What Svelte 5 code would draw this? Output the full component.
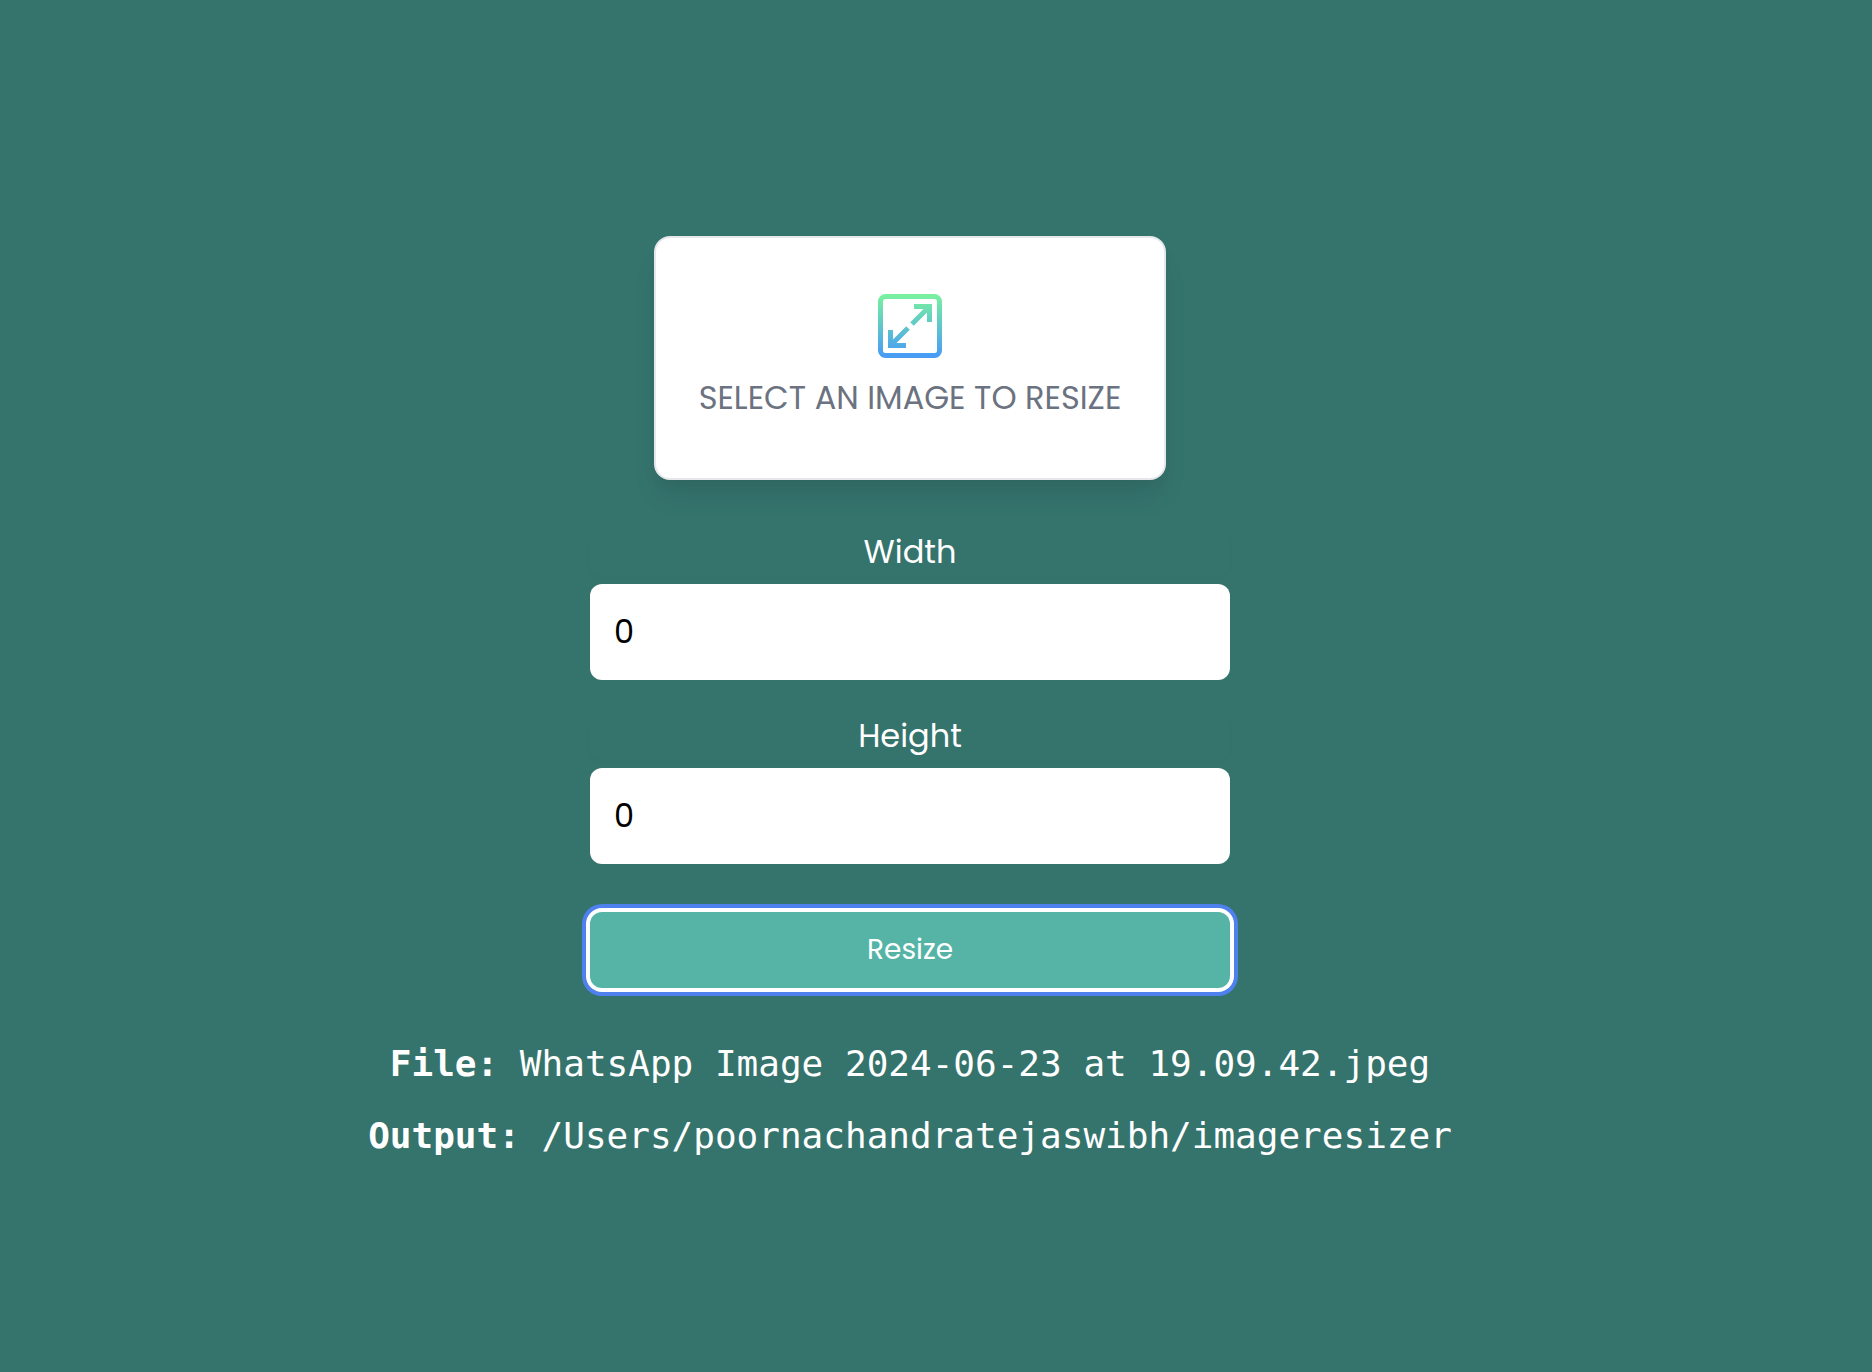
<script>
  let width = $state('0');
  let height = $state('0');
  let picker;
  let fileName = $state('WhatsApp Image 2024-06-23 at 19.09.42.jpeg');
  const output = '/Users/poornachandratejaswibh/imageresizer';

  function pick(event) {
    const file = event.currentTarget.files[0];
    if (file) fileName = file.name;
  }
</script>

<main class="page">
  <button class="card" type="button" onclick={() => picker.click()}>
    <svg class="icon" viewBox="0 0 64 64" aria-hidden="true">
      <defs>
        <linearGradient id="fade" gradientUnits="userSpaceOnUse" x1="0" y1="2" x2="0" y2="62">
          <stop offset="0" stop-color="#78f0a0" />
          <stop offset="1" stop-color="#489cf5" />
        </linearGradient>
      </defs>
      <g fill="none" stroke="url(#fade)" stroke-width="5">
        <rect x="2.5" y="2.5" width="59" height="59" rx="5" />
        <path d="M36 12.5H51.5V28M51 13L34 30" />
        <path d="M12.5 36V51.5H28M13 51L30 34" />
      </g>
    </svg>
    <span>SELECT AN IMAGE TO RESIZE</span>
  </button>
  <input class="picker" type="file" accept="image/*" aria-label="Image" bind:this={picker} onchange={pick} />

  <form class="form" onsubmit={(event) => event.preventDefault()}>
    <div class="field">
      <label for="width">Width</label>
      <input id="width" type="text" inputmode="numeric" bind:value={width} />
    </div>
    <div class="field">
      <label for="height">Height</label>
      <input id="height" type="text" inputmode="numeric" bind:value={height} />
    </div>
    <button class="submit" type="submit">Resize</button>
  </form>

  <div class="details">
    <p><strong>File:</strong>{' '}{fileName}</p>
    <p><strong>Output:</strong>{' '}{output}</p>
  </div>
</main>

<style>
  :global(body) {
    background: #35736d;
  }

  .page {
    box-sizing: border-box;
    min-height: 100vh;
    padding: 28px 52px 0 0;
    display: flex;
    flex-direction: column;
    align-items: center;
    justify-content: center;
    gap: 48px;
    color: #fff;
    font: 400 32px/48px Poppins, Inter, sans-serif;
  }

  .card {
    box-sizing: border-box;
    width: 512px;
    max-width: 100%;
    padding: 56px 0;
    display: flex;
    flex-direction: column;
    align-items: center;
    gap: 16px;
    border: 2px solid #e5e7eb;
    border-radius: 16px;
    background: #fff;
    color: #6b7280;
    font: inherit;
    box-shadow:
      0 20px 30px -6px rgb(0 0 0 / 0.08),
      0 8px 12px -4px rgb(0 0 0 / 0.05);
    cursor: pointer;
  }

  .icon {
    display: block;
    width: 64px;
    height: 64px;
  }

  .picker {
    display: none;
  }

  .form {
    width: 640px;
    max-width: 100%;
    display: flex;
    flex-direction: column;
  }

  .field {
    display: flex;
    flex-direction: column;
    gap: 8px;
    margin-bottom: 32px;
  }

  label {
    text-align: center;
    border-radius: 12px;
    box-shadow: 0 2px 4px rgb(0 0 0 / 0.02);
  }

  .field input {
    box-sizing: border-box;
    width: 100%;
    height: 96px;
    padding: 0 24px;
    border: 0;
    border-radius: 12px;
    background: #fff;
    color: #000;
    font: inherit;
  }

  .submit {
    margin-top: 16px;
    padding: 18px 24px;
    border: 0;
    border-radius: 12px;
    background: #56b4a7;
    color: #fff;
    font: inherit;
    font-size: 28px;
    line-height: 40px;
    box-shadow:
      0 0 0 4px #fff,
      0 0 0 8px #4f81ee;
    cursor: pointer;
    outline: none;
  }

  .details {
    display: flex;
    flex-direction: column;
    gap: 16px;
    font: 36px/56px Menlo, "DejaVu Sans Mono", monospace;
    text-align: center;
  }

  p {
    margin: 0;
    overflow-wrap: anywhere;
  }
</style>
